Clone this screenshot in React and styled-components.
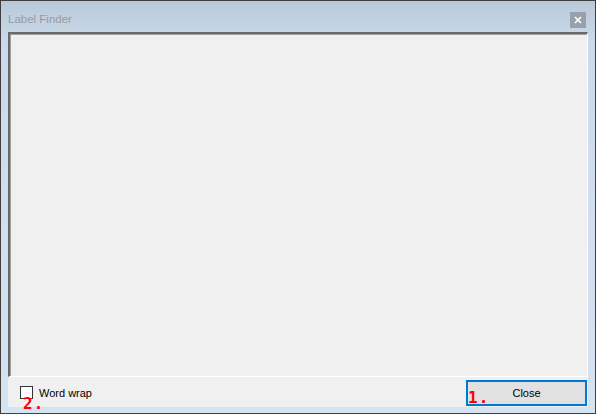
import React from 'react'
import styled, { createGlobalStyle } from 'styled-components'

const Global = createGlobalStyle`
  html, body { margin: 0; padding: 0; background: #ffffff; }
  body { font-family: "Liberation Sans", Arial, sans-serif; font-size: 12px; }
`

const Window = styled.div`
  position: relative;
  width: 596px;
  height: 414px;
  box-sizing: border-box;
  border: 1px solid #3f3f3f;
  background: linear-gradient(to bottom, #b9c9d9 0px, #cbdaea 40px, #d6e3f1 100%);
  display: flex;
  flex-direction: column;
  padding: 0 7px 6px 7px;
`

const TitleBar = styled.div`
  height: 31px;
  display: flex;
  align-items: center;
  justify-content: space-between;
  padding-bottom: 1px;
  box-sizing: border-box;
`

const Title = styled.span`
  color: #9a9a9a;
  font-size: 11.5px;
  margin-top: 5px;
`

const CloseX = styled.div`
  width: 16px;
  height: 16px;
  background: #98a1aa;
  display: flex;
  align-items: center;
  justify-content: center;
  margin-right: 2px;
  margin-top: 8px;
`

const TextBox = styled.div`
  height: 345px;
  box-sizing: border-box;
  background: #f0f0f0;
  border-top: 2px solid #696969;
  border-left: 2px solid #696969;
  border-right: 1px solid #ffffff;
  border-bottom: 1px solid #ffffff;
  box-shadow: inset 1px 1px 0 #a0a0a0;
`

const Footer = styled.div`
  height: 30px;
  background: #f0f0f0;
  display: flex;
  align-items: flex-start;
  justify-content: space-between;
  padding: 3px 1px 0 12px;
  box-sizing: border-box;
`

const CheckRow = styled.label`
  display: flex;
  align-items: center;
  gap: 6px;
  margin-top: 6px;
  color: #000;
  font-size: 11px;
`

const Box = styled.span`
  width: 11px;
  height: 11px;
  border: 1px solid #333333;
  background: #ffffff;
`

const Button = styled.div`
  width: 121px;
  height: 26px;
  box-sizing: border-box;
  border: 2px solid #0078d7;
  background: #e1e1e1;
  display: flex;
  align-items: center;
  justify-content: center;
  color: #000;
  font-size: 11px;
`

const Marker = styled.span`
  position: absolute;
  left: ${p => p.$x}px;
  top: ${p => p.$y}px;
  color: #ff0000;
  font-family: "DejaVu Sans Mono", monospace;
  font-weight: bold;
  font-size: 16px;
  line-height: 16px;
  letter-spacing: 1px;
`

export default function App() {
  return (
    <>
      <Global />
      <Window>
        <TitleBar>
          <Title>Label Finder</Title>
          <CloseX>
            <svg width="8" height="8" viewBox="0 0 8 8">
              <path d="M1 1 L7 7 M7 1 L1 7" stroke="#ffffff" strokeWidth="1.6" />
            </svg>
          </CloseX>
        </TitleBar>
        <TextBox />
        <Footer>
          <CheckRow>
            <Box />
            Word wrap
          </CheckRow>
          <Button>Close</Button>
        </Footer>
        <Marker $x={467} $y={389}>1.</Marker>
        <Marker $x={22} $y={395}>2.</Marker>
      </Window>
    </>
  )
}
